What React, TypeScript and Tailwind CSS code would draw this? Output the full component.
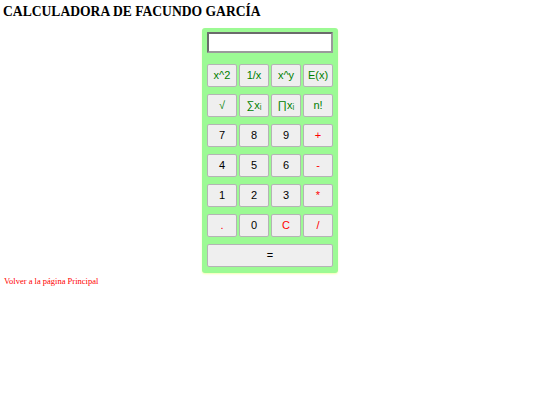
import React from "react";

type Key = { label: string; tone: "fn" | "num" | "op" };

// Calculator key rows (the "=" key is rendered separately, full width)
const rows: Key[][] = [
  [
    { label: "x^2", tone: "fn" },
    { label: "1/x", tone: "fn" },
    { label: "x^y", tone: "fn" },
    { label: "E(x)", tone: "fn" },
  ],
  [
    { label: "√", tone: "fn" },
    { label: "∑xᵢ", tone: "fn" },
    { label: "∏xᵢ", tone: "fn" },
    { label: "n!", tone: "fn" },
  ],
  [
    { label: "7", tone: "num" },
    { label: "8", tone: "num" },
    { label: "9", tone: "num" },
    { label: "+", tone: "op" },
  ],
  [
    { label: "4", tone: "num" },
    { label: "5", tone: "num" },
    { label: "6", tone: "num" },
    { label: "-", tone: "op" },
  ],
  [
    { label: "1", tone: "num" },
    { label: "2", tone: "num" },
    { label: "3", tone: "num" },
    { label: "*", tone: "op" },
  ],
  [
    { label: ".", tone: "op" },
    { label: "0", tone: "num" },
    { label: "C", tone: "op" },
    { label: "/", tone: "op" },
  ],
];

const toneClass = {
  fn: "text-[#008000]",
  num: "text-black",
  op: "text-[#ff0000]",
};

function CalcKey({ k }: { k: Key }) {
  return (
    <button
      className={`h-[23px] w-full bg-[#efefef] border border-[#b4b4b4] rounded-[2px] text-[11px] leading-none font-['Liberation_Sans',Arial,sans-serif] ${toneClass[k.tone]}`}
    >
      {k.label}
    </button>
  );
}

export default function App() {
  return (
    <div className="min-h-[405px] bg-white">
      <h3 className="pl-[3px] pt-[3px] text-[13.6px] leading-[17px] font-bold text-black font-['Liberation_Serif','Times_New_Roman',serif]">
        CALCULADORA DE FACUNDO GARCÍA
      </h3>

      <div className="mx-auto mt-[8px] w-[136px] bg-[#9cfa94] rounded-[3px] pt-[4px] px-[5px] pb-[6px] shadow-[0_1px_2px_#f4ffb0]">
        <input
          type="text"
          className="block w-[126px] h-[21px] bg-white border-2 border-t-[#6b6b6b] border-l-[#6b6b6b] border-r-[#9a9a9a] border-b-[#9a9a9a] rounded-[1px] outline-none"
        />

        <div className="mt-[11px] flex flex-col gap-[7px]">
          {rows.map((row, i) => (
            <div key={i} className="grid grid-cols-4 gap-x-[2px]">
              {row.map((k) => (
                <CalcKey key={k.label} k={k} />
              ))}
            </div>
          ))}
          <button className="h-[23px] w-full bg-[#efefef] border border-[#b4b4b4] rounded-[2px] text-[11px] leading-none text-black font-['Liberation_Sans',Arial,sans-serif]">
            =
          </button>
        </div>
      </div>

      <a
        href="#"
        className="block mt-[3px] pl-[4px] text-[8.5px] leading-[10px] text-[#ff0000] font-['Liberation_Serif','Times_New_Roman',serif]"
      >
        Volver a la página Principal
      </a>
    </div>
  );
}
